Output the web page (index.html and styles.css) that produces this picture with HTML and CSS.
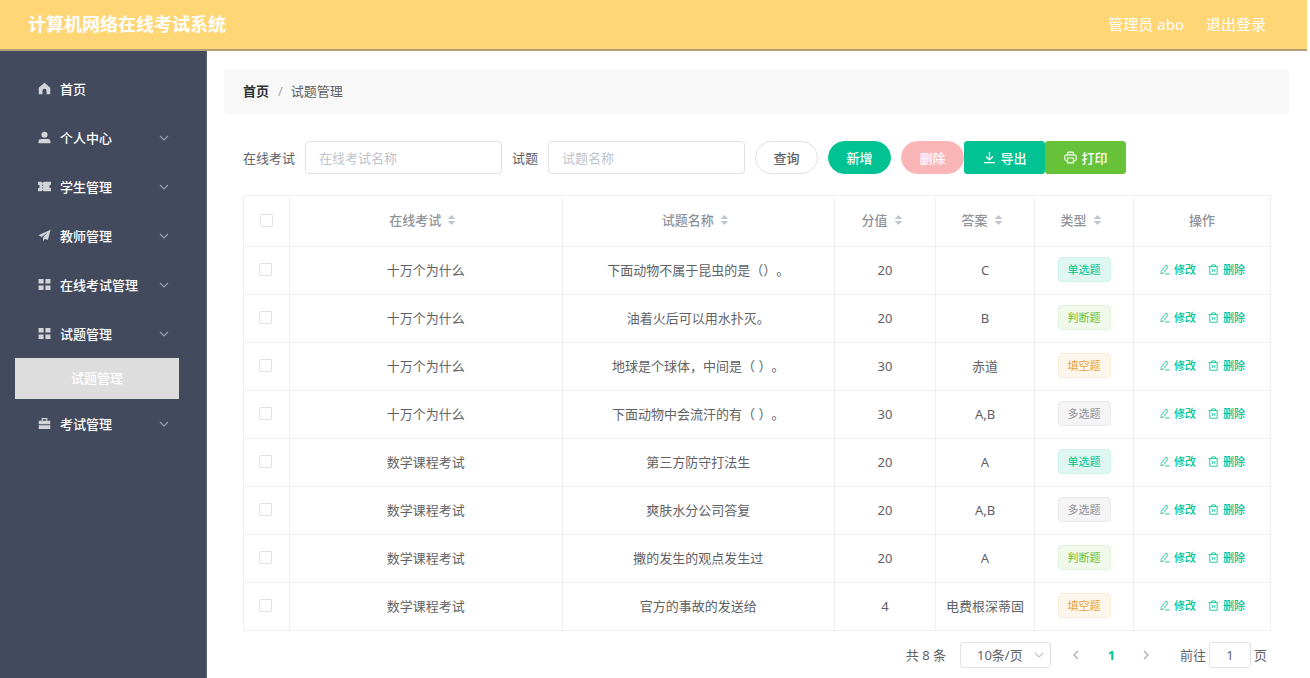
FILE: index.html
```
<!DOCTYPE html>
<html lang="zh-CN">
<head>
<meta charset="utf-8">
<title>计算机网络在线考试系统</title>
<link rel="stylesheet" href="styles.css">
</head>
<body>
<svg class="sprite" aria-hidden="true">
  <symbol id="down" viewBox="0 0 12 12"><path d="M2 4l4 4 4-4" fill="none" stroke="currentColor" stroke-width="1.2"/></symbol>
  <symbol id="left" viewBox="0 0 12 12"><path d="M8 2L4 6l4 4" fill="none" stroke="currentColor" stroke-width="1.2"/></symbol>
  <symbol id="right" viewBox="0 0 12 12"><path d="M4 2l4 4-4 4" fill="none" stroke="currentColor" stroke-width="1.2"/></symbol>
  <symbol id="sort" viewBox="0 0 10 12"><path d="M5 0.5L9.2 5H0.8zM5 11.5L9.2 7H0.8z" fill="currentColor"/></symbol>
  <symbol id="home" viewBox="0 0 14 14"><path d="M7 .8L.8 6.300V13.200h4V9.600a2.200 2.200 0 0 1 4.400 0v3.600h4V6.300z" fill="currentColor"/></symbol>
  <symbol id="user" viewBox="0 0 14 14"><circle cx="7" cy="4.100" r="3.300" fill="currentColor"/><path d="M.6 13.300v-2.300C.6 9.400 1.800 8.500 3.400 8.500h7.200c1.600 0 2.800.9 2.800 2.500v2.300z" fill="currentColor"/></symbol>
  <symbol id="ticket" viewBox="0 0 14 14"><path d="M0 2h3.800l1.200 1.200L6.200 2H14v3.100a1.900 1.900 0 0 0 0 3.800V12H6.200L5 10.800 3.800 12H0V8.900a1.900 1.900 0 0 0 0-3.800z" fill="currentColor"/><path d="M5 4.800v1.500M5 7.700v1.500" stroke="#434a5d" stroke-width=".9"/></symbol>
  <symbol id="plane" viewBox="0 0 14 14"><path d="M13.500.8L.5 6.800l3.600 1.700 6.200-5-4.800 5.700v3.900l2-2.700 3.200 1.500z" fill="currentColor"/></symbol>
  <symbol id="grid" viewBox="0 0 14 14"><path d="M.6 1h5.400v5H.6zM8 1h5.400v5H8zM.6 8h5.400v5H.6zM8 8h5.400v5H8z" fill="currentColor"/></symbol>
  <symbol id="case" viewBox="0 0 14 14"><path d="M4.500 4V1.800h5V4" fill="none" stroke="currentColor" stroke-width="1.200"/><path d="M.8 4h12.400v3.900H.8zM.8 8.800h12.400V13H.8z" fill="currentColor"/></symbol>
  <symbol id="download" viewBox="0 0 12 12"><path d="M6 1v7M2.800 5L6 8.200 9.200 5M1 10.700h10" fill="none" stroke="currentColor" stroke-width="1.200"/></symbol>
  <symbol id="printer" viewBox="0 0 14 14"><path d="M3.800 4.200V2.700A1.500 1.500 0 0 1 5.300 1.200h3.400a1.500 1.500 0 0 1 1.500 1.500v1.500M3.800 10.500H3A2.200 2.200 0 0 1 .8 8.300V6.400A2.200 2.200 0 0 1 3 4.200h8a2.200 2.200 0 0 1 2.200 2.200v1.900a2.200 2.200 0 0 1-2.200 2.200h-.8M3.800 7.500h6.400v5.300H3.800z" fill="none" stroke="currentColor" stroke-width="1.200"/></symbol>
  <symbol id="edit" viewBox="0 0 12 12"><path d="M7.500 1.300l2.300 1.500-4.900 7-2.700 1.100.2-2.800zM6.500 10.900h5" fill="none" stroke="currentColor" stroke-width=".9"/></symbol>
  <symbol id="trash" viewBox="0 0 12 12"><path d="M.8 2.800h10.400M4 2.800V1h4v1.800M2 2.800v8.400h8V2.800M4.800 5.500v3M7.200 5.500v3" fill="none" stroke="currentColor" stroke-width=".9"/></symbol>
</svg>

<header class="topbar">
  <h1 class="brand">计算机网络在线考试系统</h1>
  <div class="account">
    <span>管理员 abo</span>
    <a class="logout" href="#">退出登录</a>
  </div>
</header>

<div class="layout">
  <nav class="sidebar">
    <a class="item" href="#"><svg class="ico"><use href="#home"/></svg><span>首页</span></a>
    <a class="item" href="#"><svg class="ico"><use href="#user"/></svg><span>个人中心</span><svg class="chev"><use href="#down"/></svg></a>
    <a class="item" href="#"><svg class="ico"><use href="#ticket"/></svg><span>学生管理</span><svg class="chev"><use href="#down"/></svg></a>
    <a class="item" href="#"><svg class="ico"><use href="#plane"/></svg><span>教师管理</span><svg class="chev"><use href="#down"/></svg></a>
    <a class="item" href="#"><svg class="ico"><use href="#grid"/></svg><span>在线考试管理</span><svg class="chev"><use href="#down"/></svg></a>
    <a class="item" href="#"><svg class="ico"><use href="#grid"/></svg><span>试题管理</span><svg class="chev"><use href="#down"/></svg></a>
    <a class="subitem" href="#">试题管理</a>
    <a class="item" href="#"><svg class="ico"><use href="#case"/></svg><span>考试管理</span><svg class="chev"><use href="#down"/></svg></a>
  </nav>

  <main class="main">
    <div class="crumbs"><a class="crumb-home" href="#">首页</a><span class="slash">/</span><span>试题管理</span></div>

    <section class="content">
      <form class="filters">
        <label for="exam">在线考试</label>
        <input class="field" id="exam" type="text" placeholder="在线考试名称">
        <label for="question">试题</label>
        <input class="field" id="question" type="text" placeholder="试题名称">
        <button class="btn round" type="button">查询</button>
        <button class="btn round primary" type="button">新增</button>
        <div class="group">
          <button class="btn round danger" type="button">删除</button>
          <button class="btn square primary" type="button"><svg class="btn-ico"><use href="#download"/></svg>导出</button>
          <button class="btn square success" type="button"><svg class="btn-ico"><use href="#printer"/></svg>打印</button>
        </div>
      </form>

      <table class="grid">
        <colgroup><col class="c-check"><col><col><col class="c-score"><col class="c-short"><col class="c-short"><col class="c-ops"></colgroup>
        <thead>
          <tr>
            <th><input class="check" type="checkbox" aria-label="全选"></th>
            <th>在线考试<svg class="sort"><use href="#sort"/></svg></th>
            <th>试题名称<svg class="sort"><use href="#sort"/></svg></th>
            <th>分值<svg class="sort"><use href="#sort"/></svg></th>
            <th>答案<svg class="sort"><use href="#sort"/></svg></th>
            <th>类型<svg class="sort"><use href="#sort"/></svg></th>
            <th>操作</th>
          </tr>
        </thead>
        <tbody>
          <tr><td><input class="check" type="checkbox" aria-label="选择"></td><td>十万个为什么</td><td>下面动物不属于昆虫的是（）。</td><td>20</td><td>C</td><td><span class="tag t-single">单选题</span></td><td><div class="ops"><button class="op" type="button"><svg class="op-ico"><use href="#edit"/></svg>修改</button><button class="op" type="button"><svg class="op-ico"><use href="#trash"/></svg>删除</button></div></td></tr>
          <tr><td><input class="check" type="checkbox" aria-label="选择"></td><td>十万个为什么</td><td>油着火后可以用水扑灭。</td><td>20</td><td>B</td><td><span class="tag t-judge">判断题</span></td><td><div class="ops"><button class="op" type="button"><svg class="op-ico"><use href="#edit"/></svg>修改</button><button class="op" type="button"><svg class="op-ico"><use href="#trash"/></svg>删除</button></div></td></tr>
          <tr><td><input class="check" type="checkbox" aria-label="选择"></td><td>十万个为什么</td><td>地球是个球体，中间是（ ）。</td><td>30</td><td>赤道</td><td><span class="tag t-blank">填空题</span></td><td><div class="ops"><button class="op" type="button"><svg class="op-ico"><use href="#edit"/></svg>修改</button><button class="op" type="button"><svg class="op-ico"><use href="#trash"/></svg>删除</button></div></td></tr>
          <tr><td><input class="check" type="checkbox" aria-label="选择"></td><td>十万个为什么</td><td>下面动物中会流汗的有（ ）。</td><td>30</td><td>A,B</td><td><span class="tag t-multi">多选题</span></td><td><div class="ops"><button class="op" type="button"><svg class="op-ico"><use href="#edit"/></svg>修改</button><button class="op" type="button"><svg class="op-ico"><use href="#trash"/></svg>删除</button></div></td></tr>
          <tr><td><input class="check" type="checkbox" aria-label="选择"></td><td>数学课程考试</td><td>第三方防守打法生</td><td>20</td><td>A</td><td><span class="tag t-single">单选题</span></td><td><div class="ops"><button class="op" type="button"><svg class="op-ico"><use href="#edit"/></svg>修改</button><button class="op" type="button"><svg class="op-ico"><use href="#trash"/></svg>删除</button></div></td></tr>
          <tr><td><input class="check" type="checkbox" aria-label="选择"></td><td>数学课程考试</td><td>爽肤水分公司答复</td><td>20</td><td>A,B</td><td><span class="tag t-multi">多选题</span></td><td><div class="ops"><button class="op" type="button"><svg class="op-ico"><use href="#edit"/></svg>修改</button><button class="op" type="button"><svg class="op-ico"><use href="#trash"/></svg>删除</button></div></td></tr>
          <tr><td><input class="check" type="checkbox" aria-label="选择"></td><td>数学课程考试</td><td>撒的发生的观点发生过</td><td>20</td><td>A</td><td><span class="tag t-judge">判断题</span></td><td><div class="ops"><button class="op" type="button"><svg class="op-ico"><use href="#edit"/></svg>修改</button><button class="op" type="button"><svg class="op-ico"><use href="#trash"/></svg>删除</button></div></td></tr>
          <tr><td><input class="check" type="checkbox" aria-label="选择"></td><td>数学课程考试</td><td>官方的事故的发送给</td><td>4</td><td>电费根深蒂固</td><td><span class="tag t-blank">填空题</span></td><td><div class="ops"><button class="op" type="button"><svg class="op-ico"><use href="#edit"/></svg>修改</button><button class="op" type="button"><svg class="op-ico"><use href="#trash"/></svg>删除</button></div></td></tr>
        </tbody>
      </table>

      <div class="pager">
        <span class="total">共 8 条</span>
        <div class="size">
          <select class="size-select" aria-label="每页条数"><option>10条/页</option></select>
          <svg class="size-chev"><use href="#down"/></svg>
        </div>
        <div class="pages">
          <button class="page" type="button" aria-label="上一页"><svg class="page-ico"><use href="#left"/></svg></button>
          <button class="page current" type="button">1</button>
          <button class="page" type="button" aria-label="下一页"><svg class="page-ico"><use href="#right"/></svg></button>
        </div>
        <div class="jump">
          <label for="jump">前往</label>
          <input class="jump-field" id="jump" type="text" value="1">
          <span>页</span>
        </div>
      </div>
    </section>
  </main>
</div>
</body>
</html>
```
FILE: styles.css
```
* { box-sizing: border-box; }

html, body { min-height: 100%; }

body {
  display: flex;
  flex-direction: column;
  min-height: 100vh;
  margin: 0;
  padding-right: 3px;
  background: #fff;
  color: #606266;
  font: 13px/20px "Noto Sans", "Noto Sans CJK SC", sans-serif;
  text-spacing-trim: space-all;
}

input, button, select { font: inherit; color: inherit; margin: 0; }
button { cursor: pointer; }
a { color: inherit; text-decoration: none; }
svg { flex: none; }
.sprite { display: none; }

/* Top bar */
.topbar {
  display: flex;
  align-items: center;
  justify-content: space-between;
  height: 51px;
  padding: 0 41px 2px 28px;
  background: #ffd676;
  border-bottom: 2px solid #b3a078;
  color: #fff;
}
.brand { margin: 0; font-size: 18px; line-height: 24px; font-weight: 700; }
.account { display: flex; gap: 22px; font-size: 15px; }

.layout { display: flex; flex: 1; }

/* Sidebar */
.sidebar {
  flex: none;
  width: 207px;
  padding: 13px 27px 0 15px;
  background: #434a5d;
  border-right: 1px solid #5d6374;
  color: #fff;
  font-weight: 500;
}
.item {
  display: flex;
  align-items: center;
  gap: 9px;
  height: 49px;
  padding: 0 9px 0 23px;
}
.ico { width: 13px; height: 13px; color: #d3d3d8; }
.chev { width: 12px; height: 12px; margin-left: auto; color: #9a9fac; }
.subitem {
  display: block;
  padding: 10px 0;
  background: #ddd;
  line-height: 21px;
  text-align: center;
}

/* Main column */
.main { flex: 1; min-width: 0; padding: 18px 18px 0 17px; }
.crumbs {
  display: flex;
  align-items: center;
  height: 45px;
  padding: 0 19px 2px;
  border-radius: 4px;
  background: #f8f8f8;
}
.crumb-home { color: #303133; font-weight: 700; }
.slash { margin: 0 8px 0 9px; color: #a8abb2; }
.content { padding: 27px 18px 0 19px; }

.filters { display: flex; align-items: center; gap: 10px; margin-bottom: 21px; }
.field {
  width: 197px;
  height: 33px;
  padding: 0 13px;
  border: 1px solid #dfe2e8;
  border-radius: 4px;
  background: #fff;
}
.field::placeholder { color: #c0c4cc; }
.group { display: flex; }
.btn {
  display: flex;
  align-items: center;
  justify-content: center;
  gap: 5px;
  height: 33px;
  border: 1px solid #dfe2e8;
  background: #fff;
  font-weight: 500;
}
.round { width: 63px; padding: 0; border-radius: 17px; }
.square { width: 81px; padding: 0; border-radius: 3px; }
.primary { background: #00c292; border-color: #00c292; color: #fff; }
.danger { background: #fab6b6; border-color: #fab6b6; color: #fff; }
.success { background: #67c23a; border-color: #67c23a; color: #fff; }
.btn-ico { width: 13px; height: 13px; }

/* Table */
.grid { width: 100%; table-layout: fixed; border-collapse: collapse; }
.c-check { width: 46px; }
.c-score { width: 101px; }
.c-short { width: 99px; }
.c-ops { width: 137px; }
.grid th, .grid td {
  height: 48px;
  padding: 0 0 2px;
  border: 1px solid #eff0f3;
  text-align: center;
  vertical-align: middle;
  white-space: nowrap;
}
.grid th { height: 51px; color: #909399; font-weight: 500; }
.grid td:first-child { padding-right: 3px; }
.sort { width: 9px; height: 12px; margin: 0 6px; vertical-align: -1px; color: #c0c4cc; }
.check {
  appearance: none;
  display: block;
  width: 13px;
  height: 13px;
  margin: 0 auto;
  border: 1px solid #dfe2e8;
  border-radius: 2px;
  background: #fff;
}
.tag {
  display: inline-block;
  padding: 0 9px;
  border: 1px solid;
  border-radius: 4px;
  font-size: 11px;
  line-height: 23px;
  vertical-align: middle;
}
.t-single { background: #e0f7f1; border-color: #ccf3e9; color: #00c292; }
.t-judge { background: #f0f9eb; border-color: #e1f3d8; color: #67c23a; }
.t-blank { background: #fdf6ec; border-color: #faecd8; color: #e6a23c; }
.t-multi { background: #f4f4f5; border-color: #e9e9eb; color: #909399; }
.ops { display: flex; justify-content: center; gap: 12px; }
.op {
  display: flex;
  align-items: center;
  gap: 4px;
  padding: 0;
  border: 0;
  background: none;
  color: #00c292;
  font-size: 11px;
  font-weight: 500;
}
.op-ico { width: 11px; height: 11px; }

/* Pagination */
.pager {
  display: flex;
  align-items: center;
  justify-content: flex-end;
  gap: 8px;
  padding: 11px 4px 10px 0;
}
.total { padding-right: 6px; }
.size { position: relative; }
.size-select {
  appearance: none;
  display: block;
  width: 91px;
  height: 26px;
  padding: 0 16px;
  border: 1px solid #dfe2e8;
  border-radius: 3px;
  background: #fff;
}
.size-chev {
  position: absolute;
  top: 7px;
  right: 6px;
  width: 12px;
  height: 12px;
  color: #c0c4cc;
  pointer-events: none;
}
.pages { display: flex; padding-right: 8px; }
.page {
  display: flex;
  align-items: center;
  justify-content: center;
  width: 35px;
  padding: 0;
  border: 0;
  background: none;
  color: #a8abb2;
}
.current { color: #00c292; font-weight: 700; }
.page-ico { width: 12px; height: 12px; }
.jump { display: flex; align-items: center; gap: 3px; }
.jump-field {
  width: 42px;
  height: 26px;
  padding: 0;
  border: 1px solid #dfe2e8;
  border-radius: 3px;
  background: #fff;
  text-align: center;
}
```
